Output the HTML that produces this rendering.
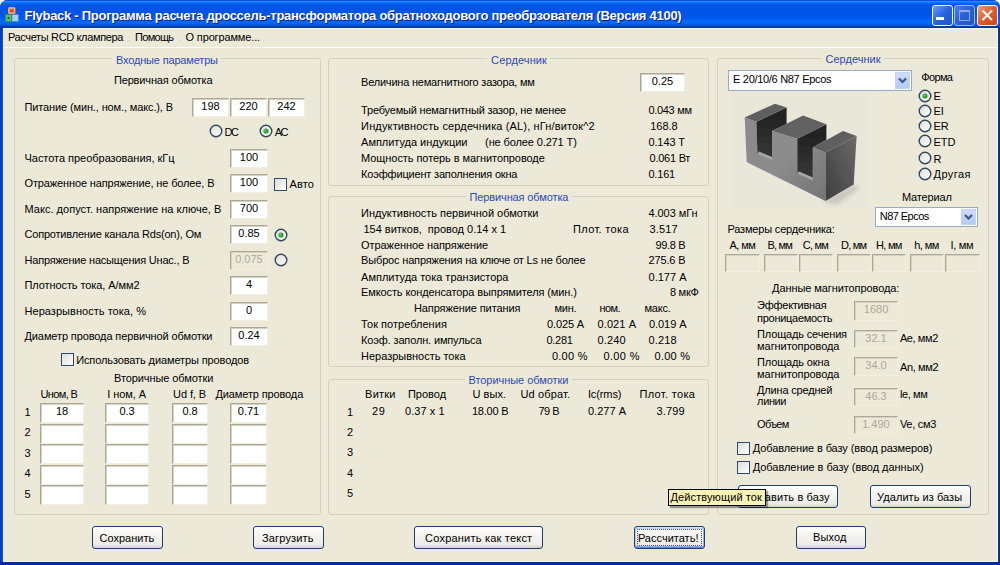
<!DOCTYPE html>
<html><head><meta charset="utf-8"><title>Flyback</title>
<style>
html,body{margin:0;padding:0;background:#fff;width:1000px;height:565px;overflow:hidden}
#win{position:absolute;left:0;top:0;width:1000px;height:565px;font-family:'Liberation Sans',sans-serif;font-size:11px;line-height:11px;color:#000}
#win div,#win svg{position:absolute}
.t{white-space:pre}
.frame{left:0;top:0;width:1000px;height:565px;background:#0A3DD0;border-radius:8px 8px 0 0}
.tbar{left:0;top:0;width:1000px;height:28px;border-radius:7px 7px 0 0;
 background:linear-gradient(to bottom,#0048C8 0%,#0858E0 3%,#3593FF 6%,#288EFF 6%,#127DFF 8%,#036FFC 10%,#0262EE 14%,#0057E5 20%,#0054E3 24%,#0055EB 56%,#005BF5 66%,#026AFE 76%,#0062EF 86%,#0052D6 92%,#0040AB 94%,#003092 100%)}
.client{left:4px;top:29px;width:993px;height:532px;background:#ECE9D8}
.gb{border:1px solid #D0D0BF;border-radius:3px}
.gbt{background:#ECE9D8}
.ed{background:#fff;border:1px solid;border-color:#ACA899 #F1EFE2 #F1EFE2 #ACA899;box-shadow:inset 1px 1px 0 #D5D2C4}
.ed.dis{background:#ECE9D8}
.btn{border:1px solid #1A3F6E;border-radius:3px;background:linear-gradient(to bottom,#FFFFFF 0%,#F4F3EE 40%,#ECEBE5 85%,#D6D0C5 100%)}
.btn.foc{box-shadow:inset 0 1px 0 #CEE7FF,inset 0 -1px 0 #6982EE,inset 1px 0 0 #B8D0F6,inset -1px 0 0 #98B8EA,inset 0 2px 0 #BCD4F6,inset 0 -2px 0 #89ADE4}
.focr{border:1px dotted #555}
.cb{width:11px;height:11px;border:1px solid #2E4A6E;background:linear-gradient(135deg,#DCDCD7 0%,#FFFFFF 100%)}
.rd{width:11px;height:11px;border:1px solid #1C5180;border-radius:50%;background:linear-gradient(135deg,#DCDCD7 0%,#FFFFFF 100%)}
.rdot{width:5px;height:5px;border-radius:50%;background:radial-gradient(circle at 40% 40%,#55D551 0%,#21A121 70%,#1E9C1E 100%)}
.cmb{background:#fff;border:1px solid #98ABC4}
.cbtn{border:1px solid #C3D3F8;border-radius:0;background:linear-gradient(to bottom,#D0DDFA 0%,#C1D2F8 50%,#B6CAF4 100%)}
.tip{background:#F8F2B4;border:1px solid #000;box-shadow:2px 2px 1px rgba(0,0,0,0.35)}
.capb{width:19px;height:19px;border:1px solid #fff;border-radius:3px;background:linear-gradient(135deg,#6C9BFF 0%,#2663E0 50%,#1F52CE 100%)}
.capx{width:19px;height:19px;border:1px solid #fff;border-radius:3px;background:linear-gradient(135deg,#F39B79 0%,#E05A30 50%,#C94520 100%)}

</style></head><body>
<div id="win">
<div class="frame"></div>
<div class="tbar"></div>
<div style="left:0;top:28px;width:3px;height:537px;background:linear-gradient(to right,#0036C8,#0A50E6)"></div>
<div style="left:998px;top:28px;width:2px;height:537px;background:#08308F"></div>
<div style="left:0;top:562px;width:1000px;height:3px;background:#0428A8"></div>
<div style="left:3px;top:28px;width:995px;height:534px;background:#F4F8FF"></div>
<div class="client"></div>
<div class="capb" style="left:932px;top:5px"></div>
<div style="left:936px;top:17px;width:8px;height:3px;background:#fff"></div>
<div class="capb" style="left:954px;top:5px;border-color:#9DB9F5;background:linear-gradient(135deg,#4A7CEB 0%,#2A5FD8 50%,#2353C8 100%)"></div>
<div style="left:959px;top:10px;width:9px;height:8px;border:1px solid #8DA8EC;border-top-width:2px"></div>
<div class="capx" style="left:977px;top:5px"></div>
<svg style="left:977px;top:5px" width="21" height="21"><path d="M5.5 5.5 L15 15 M15 5.5 L5.5 15" stroke="#FFF4EE" stroke-width="2.2"/></svg>
<svg style="left:0;top:0" width="24" height="24"><rect x="8" y="7" width="7.5" height="7" rx="1.5" fill="#F0A070"/><path d="M10 9.5 L13.5 12 M13.5 9.5 L10 12" stroke="#B8401A" stroke-width="1.2"/><rect x="5.5" y="14.5" width="6" height="7" fill="#5CC06A" stroke="#2E8A3A" stroke-width="0.6"/><rect x="7.5" y="17" width="2" height="2" fill="#1E5E28"/><rect x="12" y="14.5" width="6.5" height="7" fill="#9FD0F0" stroke="#4A7FB8" stroke-width="0.6"/></svg>
<div style="left:129px;top:40px;width:1px;height:1px;background:#C4C1B4"></div>
<div style="left:180px;top:40px;width:1px;height:1px;background:#C4C1B4"></div>
<div style="left:4px;top:47px;width:993px;height:1px;background:#fff"></div>
<div class="gb" style="left:14px;top:58px;width:305px;height:455px"></div>
<div class="gbt" style="left:112.0px;top:56px;width:109px;height:5px"></div>
<div class="ed" style="left:192px;top:98px;width:35px;height:17px"></div>
<div class="ed" style="left:230px;top:98px;width:35px;height:17px"></div>
<div class="ed" style="left:268px;top:98px;width:35px;height:17px"></div>
<svg style="left:209px;top:124.19999999999999px" width="14" height="14"><defs><linearGradient id="rg" x1="0" y1="0" x2="1" y2="1"><stop offset="0" stop-color="#DCDCD5"/><stop offset="1" stop-color="#FFFFFF"/></linearGradient></defs><circle cx="7" cy="7" r="5.8" fill="url(#rg)" stroke="#33475F" stroke-width="1.4"/></svg>
<svg style="left:259px;top:124.19999999999999px" width="14" height="14"><defs><linearGradient id="rg" x1="0" y1="0" x2="1" y2="1"><stop offset="0" stop-color="#DCDCD5"/><stop offset="1" stop-color="#FFFFFF"/></linearGradient></defs><circle cx="7" cy="7" r="5.8" fill="url(#rg)" stroke="#33475F" stroke-width="1.4"/><circle cx="7" cy="7" r="2.6" fill="#2FA034"/><circle cx="6.4" cy="6.4" r="1" fill="#6FD06A"/></svg>
<div class="ed" style="left:230px;top:149px;width:36px;height:17px"></div>
<div class="ed" style="left:230px;top:174px;width:36px;height:17px"></div>
<div class="ed" style="left:230px;top:200px;width:36px;height:17px"></div>
<div class="ed" style="left:230px;top:225px;width:36px;height:17px"></div>
<div class="ed dis" style="left:230px;top:251px;width:36px;height:17px"></div>
<div class="ed" style="left:230px;top:276px;width:36px;height:17px"></div>
<div class="ed" style="left:230px;top:302px;width:36px;height:17px"></div>
<div class="ed" style="left:230px;top:327px;width:36px;height:17px"></div>
<div class="cb" style="left:274px;top:178px"></div>
<svg style="left:273.5px;top:227.5px" width="14" height="14"><defs><linearGradient id="rg" x1="0" y1="0" x2="1" y2="1"><stop offset="0" stop-color="#DCDCD5"/><stop offset="1" stop-color="#FFFFFF"/></linearGradient></defs><circle cx="7" cy="7" r="5.8" fill="url(#rg)" stroke="#33475F" stroke-width="1.4"/><circle cx="7" cy="7" r="2.6" fill="#2FA034"/><circle cx="6.4" cy="6.4" r="1" fill="#6FD06A"/></svg>
<svg style="left:273.5px;top:252.60000000000002px" width="14" height="14"><defs><linearGradient id="rg" x1="0" y1="0" x2="1" y2="1"><stop offset="0" stop-color="#DCDCD5"/><stop offset="1" stop-color="#FFFFFF"/></linearGradient></defs><circle cx="7" cy="7" r="5.8" fill="url(#rg)" stroke="#33475F" stroke-width="1.4"/></svg>
<div class="cb" style="left:61px;top:353px"></div>
<div class="ed" style="left:40px;top:403px;width:42px;height:18px"></div>
<div class="ed" style="left:105px;top:403px;width:42px;height:18px"></div>
<div class="ed" style="left:172px;top:403px;width:34px;height:18px"></div>
<div class="ed" style="left:230px;top:403px;width:35px;height:18px"></div>
<div class="ed" style="left:40px;top:424px;width:42px;height:18px"></div>
<div class="ed" style="left:105px;top:424px;width:42px;height:18px"></div>
<div class="ed" style="left:172px;top:424px;width:34px;height:18px"></div>
<div class="ed" style="left:230px;top:424px;width:35px;height:18px"></div>
<div class="ed" style="left:40px;top:444px;width:42px;height:18px"></div>
<div class="ed" style="left:105px;top:444px;width:42px;height:18px"></div>
<div class="ed" style="left:172px;top:444px;width:34px;height:18px"></div>
<div class="ed" style="left:230px;top:444px;width:35px;height:18px"></div>
<div class="ed" style="left:40px;top:465px;width:42px;height:18px"></div>
<div class="ed" style="left:105px;top:465px;width:42px;height:18px"></div>
<div class="ed" style="left:172px;top:465px;width:34px;height:18px"></div>
<div class="ed" style="left:230px;top:465px;width:35px;height:18px"></div>
<div class="ed" style="left:40px;top:485px;width:42px;height:18px"></div>
<div class="ed" style="left:105px;top:485px;width:42px;height:18px"></div>
<div class="ed" style="left:172px;top:485px;width:34px;height:18px"></div>
<div class="ed" style="left:230px;top:485px;width:35px;height:18px"></div>
<div class="btn" style="left:92px;top:526px;width:69px;height:21px"></div>
<div class="btn" style="left:253px;top:526px;width:69px;height:21px"></div>
<div class="gb" style="left:328px;top:58px;width:379px;height:126px"></div>
<div class="gbt" style="left:487.1px;top:56px;width:62.8px;height:5px"></div>
<div class="ed" style="left:640px;top:73px;width:43px;height:17px"></div>
<div class="gb" style="left:328px;top:196px;width:379px;height:169px"></div>
<div class="gbt" style="left:465.5px;top:194px;width:106px;height:5px"></div>
<div class="gb" style="left:328px;top:379px;width:379px;height:134px"></div>
<div class="gbt" style="left:464.5px;top:377px;width:107px;height:5px"></div>
<div class="btn" style="left:414px;top:526px;width:127px;height:21px"></div>
<div class="btn foc" style="left:634px;top:526px;width:69px;height:21px"></div>
<div class="focr" style="left:637px;top:529px;width:63px;height:15px"></div>
<div class="gb" style="left:717px;top:58px;width:270px;height:455px"></div>
<div class="gbt" style="left:821.5px;top:56px;width:62px;height:5px"></div>
<div class="cmb" style="left:728px;top:70px;width:182px;height:19px"></div>
<div class="cbtn" style="left:895px;top:72px;width:13px;height:15px"></div>
<svg style="position:absolute;left:895px;top:72px" width="15" height="17"><path d="M4 6.5 l3.5 3.5 l3.5 -3.5" stroke="#3D5585" stroke-width="2.2" fill="none"/></svg>
<div style="left:730px;top:92px;width:138px;height:116px;background:#E9E7D9"></div>
<svg style="left:0;top:0" width="1000" height="565">
<defs>
<linearGradient id="rf" x1="0" y1="1" x2="1" y2="0"><stop offset="0" stop-color="#3e3e3e"/><stop offset="1" stop-color="#6a6a6a"/></linearGradient>
<linearGradient id="ff" x1="0" y1="0" x2="1" y2="1"><stop offset="0" stop-color="#8a8a8a"/><stop offset="0.5" stop-color="#8c8c8c"/><stop offset="1" stop-color="#747474"/></linearGradient>
<linearGradient id="sl" x1="0" y1="0" x2="0" y2="1"><stop offset="0" stop-color="#1e1e1e"/><stop offset="1" stop-color="#383838"/></linearGradient>
<filter id="bl"><feGaussianBlur stdDeviation="0.35"/></filter><filter id="bl2" x="-50%" y="-50%" width="200%" height="200%"><feGaussianBlur stdDeviation="2"/></filter>
</defs>
<polygon points="822,201 853.7,184.5 860,188 836,205" fill="#C9C8C0" filter="url(#bl2)"/>
<g filter="url(#bl)">
<polygon points="744.7,117.4 756.4,121.8 757.4,154.3 772,160.2 772,131 797.3,138.8 797.3,173.8 812.8,180.6 812.8,147.5 825.5,152.4 825.5,201 746.7,162.1" fill="url(#ff)"/>
<polygon points="756.4,121.8 786.6,107.6 786.6,124 772,131 772,160.2 757.4,154.3" fill="url(#sl)"/>
<polygon points="757.4,154.3 772,160.2 772,157 759,151.5" fill="#a8a8a8"/>
<polygon points="797.3,138.8 826.4,124.2 826.4,140 812.8,147.5 812.8,180.6 797.3,173.8" fill="url(#sl)"/>
<polygon points="797.3,173.8 812.8,180.6 812.8,177.5 799,171.5" fill="#a8a8a8"/>
<polygon points="744.7,117.4 774.9,103.8 786.6,107.6 756.4,121.8" fill="#5f5f5f"/>
<polygon points="772,131 803.1,115.4 826.4,124.2 797.3,138.8" fill="#626262"/>
<polygon points="812.8,147.5 843,131 856.6,135.9 825.5,152.4" fill="#5f5f5f"/>
<polygon points="825.5,152.4 856.6,135.9 853.7,184.5 825.5,201" fill="url(#rf)"/>
</g>
</svg>
<svg style="left:918.3px;top:88.6px" width="14" height="14"><defs><linearGradient id="rg" x1="0" y1="0" x2="1" y2="1"><stop offset="0" stop-color="#DCDCD5"/><stop offset="1" stop-color="#FFFFFF"/></linearGradient></defs><circle cx="7" cy="7" r="5.8" fill="url(#rg)" stroke="#33475F" stroke-width="1.4"/><circle cx="7" cy="7" r="2.6" fill="#2FA034"/><circle cx="6.4" cy="6.4" r="1" fill="#6FD06A"/></svg>
<svg style="left:918.3px;top:104px" width="14" height="14"><defs><linearGradient id="rg" x1="0" y1="0" x2="1" y2="1"><stop offset="0" stop-color="#DCDCD5"/><stop offset="1" stop-color="#FFFFFF"/></linearGradient></defs><circle cx="7" cy="7" r="5.8" fill="url(#rg)" stroke="#33475F" stroke-width="1.4"/></svg>
<svg style="left:918.3px;top:119.2px" width="14" height="14"><defs><linearGradient id="rg" x1="0" y1="0" x2="1" y2="1"><stop offset="0" stop-color="#DCDCD5"/><stop offset="1" stop-color="#FFFFFF"/></linearGradient></defs><circle cx="7" cy="7" r="5.8" fill="url(#rg)" stroke="#33475F" stroke-width="1.4"/></svg>
<svg style="left:918.3px;top:133.9px" width="14" height="14"><defs><linearGradient id="rg" x1="0" y1="0" x2="1" y2="1"><stop offset="0" stop-color="#DCDCD5"/><stop offset="1" stop-color="#FFFFFF"/></linearGradient></defs><circle cx="7" cy="7" r="5.8" fill="url(#rg)" stroke="#33475F" stroke-width="1.4"/></svg>
<svg style="left:918.3px;top:151.4px" width="14" height="14"><defs><linearGradient id="rg" x1="0" y1="0" x2="1" y2="1"><stop offset="0" stop-color="#DCDCD5"/><stop offset="1" stop-color="#FFFFFF"/></linearGradient></defs><circle cx="7" cy="7" r="5.8" fill="url(#rg)" stroke="#33475F" stroke-width="1.4"/></svg>
<svg style="left:918.3px;top:167.3px" width="14" height="14"><defs><linearGradient id="rg" x1="0" y1="0" x2="1" y2="1"><stop offset="0" stop-color="#DCDCD5"/><stop offset="1" stop-color="#FFFFFF"/></linearGradient></defs><circle cx="7" cy="7" r="5.8" fill="url(#rg)" stroke="#33475F" stroke-width="1.4"/></svg>
<div class="cmb" style="left:875px;top:207px;width:101px;height:18px"></div>
<div class="cbtn" style="left:961px;top:209px;width:13px;height:14px"></div>
<svg style="position:absolute;left:961px;top:209px" width="15" height="16"><path d="M4 6.0 l3.5 3.5 l3.5 -3.5" stroke="#3D5585" stroke-width="2.2" fill="none"/></svg>
<div class="ed dis" style="left:725px;top:254px;width:33px;height:16px"></div>
<div class="ed dis" style="left:764px;top:254px;width:32px;height:16px"></div>
<div class="ed dis" style="left:799px;top:254px;width:32px;height:16px"></div>
<div class="ed dis" style="left:837px;top:254px;width:32px;height:16px"></div>
<div class="ed dis" style="left:872px;top:254px;width:32px;height:16px"></div>
<div class="ed dis" style="left:910px;top:254px;width:32px;height:16px"></div>
<div class="ed dis" style="left:945px;top:254px;width:33px;height:16px"></div>
<div class="ed dis" style="left:854px;top:301px;width:42px;height:18px"></div>
<div class="ed dis" style="left:854px;top:330px;width:42px;height:16px"></div>
<div class="ed dis" style="left:854px;top:357px;width:42px;height:17px"></div>
<div class="ed dis" style="left:854px;top:388px;width:42px;height:16px"></div>
<div class="ed dis" style="left:854px;top:416px;width:42px;height:16px"></div>
<div class="cb" style="left:737px;top:442px"></div>
<div class="cb" style="left:737px;top:461px"></div>
<div class="btn" style="left:738px;top:485px;width:98px;height:21px"></div>
<div class="btn" style="left:870px;top:485px;width:99px;height:21px"></div>
<div class="btn" style="left:796px;top:526px;width:68px;height:21px"></div>
<div class="tip" style="left:668px;top:489px;width:96px;height:15px;z-index:5"></div>
<div class="t" style="left:24.5px;top:9.0px;color:#fff;font-size:13px;line-height:13px;font-weight:bold;letter-spacing:-0.27px;text-shadow:1px 1px 0 #0A1883;">Flyback - Программа расчета дроссель-трансформатора обратноходового преобрзователя (Версия 4100)</div>
<div class="t" style="left:7.9px;top:32.0px;color:#000;letter-spacing:-0.35px;">Расчеты RCD клампера</div>
<div class="t" style="left:135.1px;top:32.0px;color:#000;letter-spacing:-0.70px;">Помощь</div>
<div class="t" style="left:185.5px;top:32.0px;color:#000;letter-spacing:-0.14px;">О программе...</div>
<div class="t" style="left:116.0px;top:55.0px;color:#2C4BB4;letter-spacing:-0.17px;">Входные параметры</div>
<div class="t" style="left:113.9px;top:75.0px;color:#000;letter-spacing:-0.14px;">Первичная обмотка</div>
<div class="t" style="left:24.5px;top:102.0px;color:#000;letter-spacing:-0.13px;">Питание (мин., ном., макс.), В</div>
<div class="t" style="left:201.3px;top:101.0px;color:#000;">198</div>
<div class="t" style="left:239.3px;top:101.0px;color:#000;">220</div>
<div class="t" style="left:277.3px;top:101.0px;color:#000;">242</div>
<div class="t" style="left:224.5px;top:126.5px;color:#000;letter-spacing:-1.50px;">DC</div>
<div class="t" style="left:274.7px;top:126.5px;color:#000;letter-spacing:-1.48px;">AC</div>
<div class="t" style="left:24.5px;top:153.0px;color:#000;letter-spacing:-0.03px;">Частота преобразования, кГц</div>
<div class="t" style="left:239.8px;top:152.0px;color:#000;">100</div>
<div class="t" style="left:24.5px;top:178.0px;color:#000;letter-spacing:-0.13px;">Отраженное напряжение, не более, В</div>
<div class="t" style="left:239.8px;top:177.0px;color:#000;">100</div>
<div class="t" style="left:24.5px;top:204.0px;color:#000;letter-spacing:0.02px;">Макс. допуст. напряжение на ключе, В</div>
<div class="t" style="left:239.8px;top:203.0px;color:#000;">700</div>
<div class="t" style="left:24.5px;top:229.0px;color:#000;letter-spacing:-0.20px;">Сопротивление канала Rds(on), Ом</div>
<div class="t" style="left:238.3px;top:228.0px;color:#000;">0.85</div>
<div class="t" style="left:24.5px;top:255.0px;color:#000;letter-spacing:-0.21px;">Напряжение насыщения Uнас., В</div>
<div class="t" style="left:235.2px;top:254.0px;color:#ACA899;">0.075</div>
<div class="t" style="left:24.5px;top:280.0px;color:#000;letter-spacing:-0.09px;">Плотность тока, А/мм2</div>
<div class="t" style="left:245.9px;top:279.0px;color:#000;">4</div>
<div class="t" style="left:24.5px;top:306.0px;color:#000;letter-spacing:0.04px;">Неразрывность тока, %</div>
<div class="t" style="left:245.9px;top:305.0px;color:#000;">0</div>
<div class="t" style="left:24.5px;top:331.0px;color:#000;letter-spacing:-0.11px;">Диаметр провода первичной обмотки</div>
<div class="t" style="left:238.3px;top:330.0px;color:#000;">0.24</div>
<div class="t" style="left:289.5px;top:179.0px;color:#000;letter-spacing:0.17px;">Авто</div>
<div class="t" style="left:76.2px;top:354.7px;color:#000;letter-spacing:-0.11px;">Использовать диаметры проводов</div>
<div class="t" style="left:114.0px;top:372.7px;color:#000;letter-spacing:-0.09px;">Вторичные обмотки</div>
<div class="t" style="left:40.5px;top:388.8px;color:#000;letter-spacing:-0.64px;">Uном, В</div>
<div class="t" style="left:107.2px;top:388.8px;color:#000;letter-spacing:-0.06px;">I ном, А</div>
<div class="t" style="left:173.1px;top:388.8px;color:#000;letter-spacing:-0.10px;">Ud f, В</div>
<div class="t" style="left:215.5px;top:388.8px;color:#000;letter-spacing:-0.13px;">Диаметр провода</div>
<div class="t" style="left:24.5px;top:407.0px;color:#000;">1</div>
<div class="t" style="left:55.9px;top:406.0px;color:#000;">18</div>
<div class="t" style="left:119.4px;top:406.0px;color:#000;">0.3</div>
<div class="t" style="left:182.4px;top:406.0px;color:#000;">0.8</div>
<div class="t" style="left:237.8px;top:406.0px;color:#000;">0.71</div>
<div class="t" style="left:24.5px;top:427.0px;color:#000;">2</div>
<div class="t" style="left:24.5px;top:447.5px;color:#000;">3</div>
<div class="t" style="left:24.5px;top:468.0px;color:#000;">4</div>
<div class="t" style="left:24.5px;top:489.0px;color:#000;">5</div>
<div class="t" style="left:99.5px;top:533.0px;color:#000;">Сохранить</div>
<div class="t" style="left:262.0px;top:533.0px;color:#000;letter-spacing:0.16px;">Загрузить</div>
<div class="t" style="left:491.1px;top:54.6px;color:#2C4BB4;letter-spacing:0.12px;">Сердечник</div>
<div class="t" style="left:361.1px;top:77.0px;color:#000;letter-spacing:-0.22px;">Величина немагнитного зазора, мм</div>
<div class="t" style="left:651.8px;top:76.0px;color:#000;">0.25</div>
<div class="t" style="left:361.1px;top:105.0px;color:#000;letter-spacing:-0.20px;">Требуемый немагнитный зазор, не менее</div>
<div class="t" style="left:361.1px;top:121.0px;color:#000;letter-spacing:0.14px;">Индуктивность сердечника (AL), нГн/виток^2</div>
<div class="t" style="left:361.1px;top:136.6px;color:#000;letter-spacing:-0.03px;">Амплитуда индукции</div>
<div class="t" style="left:361.1px;top:152.6px;color:#000;letter-spacing:-0.07px;">Мощность потерь в магнитопроводе</div>
<div class="t" style="left:361.1px;top:168.6px;color:#000;letter-spacing:-0.18px;">Коэффициент заполнения окна</div>
<div class="t" style="left:485.1px;top:136.6px;color:#000;letter-spacing:-0.12px;">(не более 0.271 Т)</div>
<div class="t" style="left:648.4px;top:105.0px;color:#000;letter-spacing:-0.30px;">0.043 мм</div>
<div class="t" style="left:650.2px;top:121.0px;color:#000;">168.8</div>
<div class="t" style="left:648.4px;top:136.6px;color:#000;letter-spacing:-0.10px;">0.143 Т</div>
<div class="t" style="left:649.5px;top:152.6px;color:#000;letter-spacing:-0.24px;">0.061 Вт</div>
<div class="t" style="left:648.4px;top:168.6px;color:#000;letter-spacing:-0.18px;">0.161</div>
<div class="t" style="left:469.5px;top:191.6px;color:#2C4BB4;letter-spacing:-0.12px;">Первичная обмотка</div>
<div class="t" style="left:361.1px;top:208.0px;color:#000;letter-spacing:-0.03px;">Индуктивность первичной обмотки</div>
<div class="t" style="left:363.5px;top:224.0px;color:#000;letter-spacing:-0.01px;">154 витков,  провод 0.14 x 1</div>
<div class="t" style="left:573.1px;top:224.0px;color:#000;letter-spacing:0.33px;">Плот. тока</div>
<div class="t" style="left:361.1px;top:239.5px;color:#000;letter-spacing:-0.08px;">Отраженное напряжение</div>
<div class="t" style="left:361.1px;top:255.0px;color:#000;letter-spacing:-0.17px;">Выброс напряжения на ключе от Ls не более</div>
<div class="t" style="left:361.1px;top:271.5px;color:#000;letter-spacing:-0.02px;">Амплитуда тока транзистора</div>
<div class="t" style="left:361.1px;top:287.0px;color:#000;letter-spacing:-0.12px;">Емкость конденсатора выпрямителя (мин.)</div>
<div class="t" style="left:413.9px;top:303.0px;color:#000;letter-spacing:-0.09px;">Напряжение питания</div>
<div class="t" style="left:361.1px;top:319.0px;color:#000;letter-spacing:0.03px;">Ток потребления</div>
<div class="t" style="left:361.1px;top:335.0px;color:#000;letter-spacing:-0.15px;">Коэф. заполн. импульса</div>
<div class="t" style="left:361.1px;top:351.0px;color:#000;letter-spacing:-0.02px;">Неразрывность тока</div>
<div class="t" style="left:648.5px;top:208.0px;color:#000;letter-spacing:-0.07px;">4.003 мГн</div>
<div class="t" style="left:649.5px;top:224.0px;color:#000;letter-spacing:0.12px;">3.517</div>
<div class="t" style="left:655.5px;top:239.5px;color:#000;letter-spacing:-0.36px;">99.8 В</div>
<div class="t" style="left:648.5px;top:255.0px;color:#000;letter-spacing:-0.15px;">275.6 В</div>
<div class="t" style="left:648.5px;top:271.5px;color:#000;letter-spacing:0.01px;">0.177 А</div>
<div class="t" style="left:669.9px;top:287.0px;color:#000;letter-spacing:-0.23px;">8 мкФ</div>
<div class="t" style="left:554.5px;top:303.0px;color:#000;letter-spacing:-0.28px;">мин.</div>
<div class="t" style="left:599.5px;top:303.0px;color:#000;letter-spacing:-0.60px;">ном.</div>
<div class="t" style="left:644.5px;top:303.0px;color:#000;letter-spacing:-0.20px;">макс.</div>
<div class="t" style="left:547.1px;top:319.0px;color:#000;letter-spacing:-0.15px;">0.025 А</div>
<div class="t" style="left:597.5px;top:319.0px;color:#000;letter-spacing:0.11px;">0.021 А</div>
<div class="t" style="left:649.1px;top:319.0px;color:#000;letter-spacing:-0.09px;">0.019 А</div>
<div class="t" style="left:546.5px;top:335.0px;color:#000;letter-spacing:-0.28px;">0.281</div>
<div class="t" style="left:597.5px;top:335.0px;color:#000;letter-spacing:0.12px;">0.240</div>
<div class="t" style="left:648.5px;top:335.0px;color:#000;letter-spacing:0.12px;">0.218</div>
<div class="t" style="left:551.9px;top:351.0px;color:#000;letter-spacing:0.27px;">0.00 %</div>
<div class="t" style="left:603.5px;top:351.0px;color:#000;letter-spacing:0.35px;">0.00 %</div>
<div class="t" style="left:654.5px;top:351.0px;color:#000;letter-spacing:0.27px;">0.00 %</div>
<div class="t" style="left:468.5px;top:374.6px;color:#2C4BB4;letter-spacing:-0.05px;">Вторичные обмотки</div>
<div class="t" style="left:365.1px;top:389.0px;color:#000;letter-spacing:0.23px;">Витки</div>
<div class="t" style="left:407.9px;top:389.0px;color:#000;">Провод</div>
<div class="t" style="left:472.5px;top:389.0px;color:#000;letter-spacing:0.06px;">U вых.</div>
<div class="t" style="left:520.5px;top:389.0px;color:#000;letter-spacing:0.15px;">Ud обрат.</div>
<div class="t" style="left:587.9px;top:389.0px;color:#000;letter-spacing:-0.10px;">Ic(rms)</div>
<div class="t" style="left:639.5px;top:389.0px;color:#000;letter-spacing:0.33px;">Плот. тока</div>
<div class="t" style="left:347.1px;top:406.6px;color:#000;">1</div>
<div class="t" style="left:347.1px;top:427.0px;color:#000;">2</div>
<div class="t" style="left:347.1px;top:447.4px;color:#000;">3</div>
<div class="t" style="left:347.1px;top:468.0px;color:#000;">4</div>
<div class="t" style="left:347.1px;top:488.4px;color:#000;">5</div>
<div class="t" style="left:371.9px;top:406.3px;color:#000;letter-spacing:0.75px;">29</div>
<div class="t" style="left:405.1px;top:406.3px;color:#000;letter-spacing:0.04px;">0.37 x 1</div>
<div class="t" style="left:471.9px;top:406.3px;color:#000;letter-spacing:-0.22px;">18.00 В</div>
<div class="t" style="left:538.5px;top:406.3px;color:#000;letter-spacing:-0.55px;">79 В</div>
<div class="t" style="left:587.9px;top:406.3px;color:#000;letter-spacing:0.05px;">0.277 А</div>
<div class="t" style="left:656.5px;top:406.3px;color:#000;letter-spacing:0.12px;">3.799</div>
<div class="t" style="left:425.1px;top:533.0px;color:#000;letter-spacing:0.21px;">Сохранить как текст</div>
<div class="t" style="left:637.9px;top:532.6px;color:#000;letter-spacing:0.01px;">Рассчитать!</div>
<div class="t" style="left:825.5px;top:54.0px;color:#2C4BB4;letter-spacing:0.02px;">Сердечник</div>
<div class="t" style="left:733.1px;top:74.4px;color:#000;letter-spacing:-0.31px;">E 20/10/6 N87 Epcos</div>
<div class="t" style="left:921.3px;top:71.7px;color:#000;letter-spacing:-0.67px;">Форма</div>
<div class="t" style="left:933.5px;top:90.5px;color:#000;">E</div>
<div class="t" style="left:933.5px;top:106.2px;color:#000;">EI</div>
<div class="t" style="left:933.5px;top:121.1px;color:#000;">ER</div>
<div class="t" style="left:933.5px;top:136.5px;color:#000;">ETD</div>
<div class="t" style="left:933.5px;top:153.8px;color:#000;">R</div>
<div class="t" style="left:933.5px;top:169.4px;color:#000;letter-spacing:0.44px;">Другая</div>
<div class="t" style="left:902.0px;top:192.0px;color:#000;letter-spacing:-0.17px;">Материал</div>
<div class="t" style="left:879.8px;top:211.3px;color:#000;letter-spacing:-0.55px;">N87 Epcos</div>
<div class="t" style="left:727.5px;top:224.0px;color:#000;letter-spacing:-0.18px;">Размеры сердечника:</div>
<div class="t" style="left:729.5px;top:240.0px;color:#000;letter-spacing:-0.57px;">А, мм</div>
<div class="t" style="left:767.4px;top:240.0px;color:#000;letter-spacing:-0.79px;">В, мм</div>
<div class="t" style="left:802.7px;top:240.0px;color:#000;letter-spacing:-0.75px;">С, мм</div>
<div class="t" style="left:841.0px;top:240.0px;color:#000;letter-spacing:-0.80px;">D, мм</div>
<div class="t" style="left:876.1px;top:240.0px;color:#000;letter-spacing:-0.75px;">H, мм</div>
<div class="t" style="left:914.3px;top:240.0px;color:#000;letter-spacing:-0.59px;">h, мм</div>
<div class="t" style="left:950.5px;top:240.0px;color:#000;letter-spacing:-0.32px;">I, мм</div>
<div class="t" style="left:772.1px;top:283.2px;color:#000;letter-spacing:-0.09px;">Данные магнитопровода:</div>
<div class="t" style="left:757.1px;top:300.1px;color:#000;letter-spacing:-0.27px;">Эффективная</div>
<div class="t" style="left:757.1px;top:312.6px;color:#000;letter-spacing:-0.29px;">проницаемость</div>
<div class="t" style="left:757.1px;top:328.7px;color:#000;letter-spacing:-0.16px;">Площадь сечения</div>
<div class="t" style="left:757.1px;top:340.8px;color:#000;letter-spacing:-0.07px;">магнитопровода</div>
<div class="t" style="left:757.1px;top:357.0px;color:#000;letter-spacing:-0.15px;">Площадь окна</div>
<div class="t" style="left:757.1px;top:369.1px;color:#000;letter-spacing:-0.07px;">магнитопровода</div>
<div class="t" style="left:757.1px;top:384.5px;color:#000;letter-spacing:-0.18px;">Длина средней</div>
<div class="t" style="left:757.1px;top:396.2px;color:#000;letter-spacing:-0.38px;">линии</div>
<div class="t" style="left:757.1px;top:418.6px;color:#000;letter-spacing:-0.71px;">Объем</div>
<div class="t" style="left:863.8px;top:304.0px;color:#ACA899;">1680</div>
<div class="t" style="left:865.3px;top:333.0px;color:#ACA899;">32.1</div>
<div class="t" style="left:865.3px;top:360.0px;color:#ACA899;">34.0</div>
<div class="t" style="left:865.3px;top:391.0px;color:#ACA899;">46.3</div>
<div class="t" style="left:862.2px;top:419.0px;color:#ACA899;">1.490</div>
<div class="t" style="left:899.9px;top:333.1px;color:#000;letter-spacing:-0.40px;">Ae, мм2</div>
<div class="t" style="left:899.9px;top:361.8px;color:#000;letter-spacing:-0.34px;">An, мм2</div>
<div class="t" style="left:899.9px;top:388.9px;color:#000;letter-spacing:-0.40px;">le, мм</div>
<div class="t" style="left:899.9px;top:418.6px;color:#000;letter-spacing:-0.26px;">Ve, см3</div>
<div class="t" style="left:752.7px;top:443.0px;color:#000;letter-spacing:-0.10px;">Добавление в базу (ввод размеров)</div>
<div class="t" style="left:752.7px;top:462.4px;color:#000;letter-spacing:-0.04px;">Добавление в базу (ввод данных)</div>
<div class="t" style="left:744.5px;top:491.6px;color:#000;letter-spacing:0.14px;">Добавить в базу</div>
<div class="t" style="left:877.1px;top:491.6px;color:#000;letter-spacing:0.05px;">Удалить из базы</div>
<div class="t" style="left:813.1px;top:532.4px;color:#000;letter-spacing:0.12px;">Выход</div>
<div class="t" style="left:670.5px;top:492.0px;color:#000;letter-spacing:0.11px;z-index:6;">Действующий ток</div>
</div>
</body></html>
